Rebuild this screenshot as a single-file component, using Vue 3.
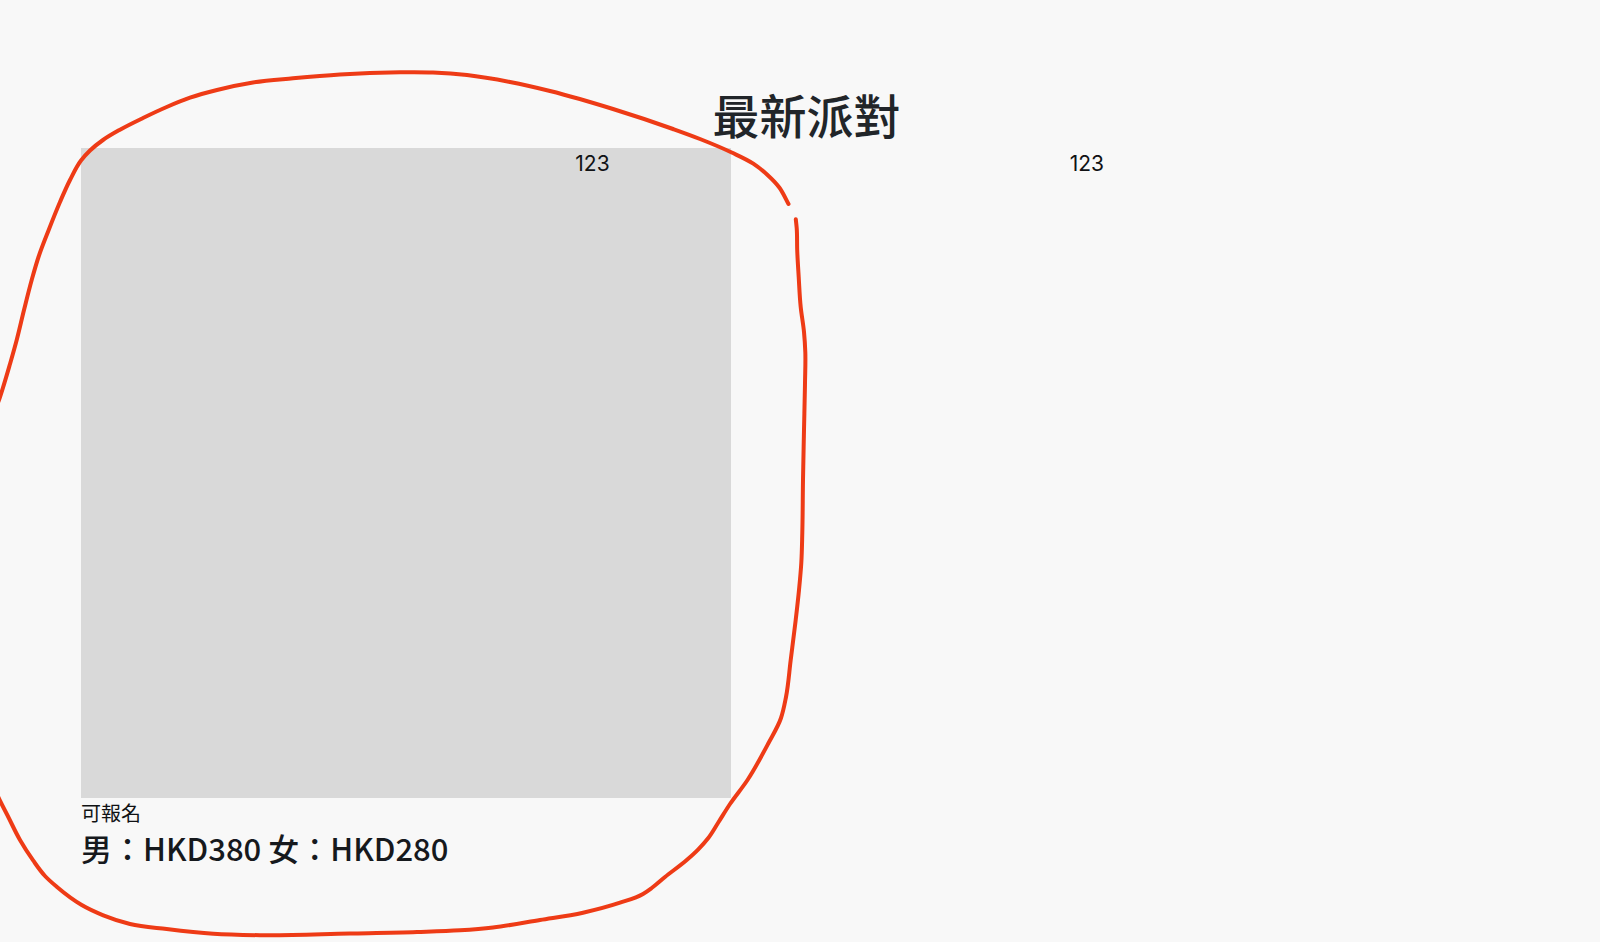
<script setup>
const strokes = [
  [
    [-6, 414], [0, 397], [10, 364], [16.7, 340], [24, 310], [31.7, 280], [38.5, 257], [48.3, 231], [60, 202],
    [70, 180], [81, 160.5], [90, 150.5], [103, 140], [120, 129.7], [143, 118], [166.7, 107], [190, 97.7],
    [217, 90], [253, 82.5], [293, 78.3], [340, 74.4], [400, 72.3], [433, 72.5], [467, 75], [510, 82],
    [550, 91], [613, 109], [673, 129], [700, 139], [731.7, 152.5], [753.3, 163.7], [767, 174.5],
    [779.3, 187.5], [788.5, 204],
  ],
  [
    [795.8, 219.3], [796.7, 228], [797.2, 250], [798.7, 277], [800.7, 307], [804, 332], [805.3, 352],
    [805, 383], [804, 430], [803, 480], [802.3, 533], [801.3, 563], [799, 590], [795.7, 620], [790.7, 660],
    [786, 697], [781, 718], [768, 744], [747.5, 780], [730, 804], [718.3, 822.5], [708.3, 838], [698.3, 849.3],
    [686.7, 860], [665, 877], [651.7, 888], [643, 894], [620, 902.7], [583, 912.7], [540, 920], [493, 927.5],
    [460, 930.3], [417, 932], [350, 933.5], [260, 935.2], [213.3, 933.7], [166.7, 929], [130, 924],
    [103.3, 915.3], [81.7, 905], [57, 887], [45, 876], [33.3, 860.7], [20, 840], [8.3, 817], [0, 800.7],
    [-6, 788],
  ],
]

const chord = (a, b) => Math.hypot(b[0] - a[0], b[1] - a[1])

// Unit-speed direction at point i, weighted by the lengths of its two neighbouring chords
function tangent(points, i) {
  const before = points[i - 1]
  const here = points[i]
  const after = points[i + 1]
  const next = after && [0, 1].map((k) => (after[k] - here[k]) / chord(here, after))
  const prev = before && [0, 1].map((k) => (here[k] - before[k]) / chord(before, here))
  if (!next) return prev
  if (!prev) return next
  const p = chord(before, here)
  const n = chord(here, after)
  return [0, 1].map((k) => (prev[k] * n + next[k] * p) / (p + n))
}

function smooth(points) {
  let d = `M${points[0].join(' ')}`
  for (let i = 0; i < points.length - 1; i++) {
    const from = points[i]
    const to = points[i + 1]
    const third = chord(from, to) / 3
    const start = tangent(points, i)
    const end = tangent(points, i + 1)
    const c1 = [0, 1].map((k) => from[k] + start[k] * third)
    const c2 = [0, 1].map((k) => to[k] - end[k] * third)
    d += `C${[...c1, ...c2, ...to].join(' ')}`
  }
  return d
}

const paths = strokes.map(smooth)
</script>

<template>
  <main class="page">
    <h1 class="title">最新派對</h1>
    <section class="parties">
      <article class="party">
        <div class="cover"></div>
        <p class="status">可報名</p>
        <h2 class="price">男：HKD380 女：HKD280</h2>
      </article>
      <article class="party">123</article>
      <article class="party">123</article>
    </section>
    <svg class="marker" viewBox="0 0 1600 942" width="1600" height="942" aria-hidden="true">
      <path v-for="(d, i) in paths" :key="i" :d="d" />
    </svg>
  </main>
</template>

<style>
body {
  margin: 0;
  background: #f8f8f8;
}
</style>

<style scoped>
.page {
  position: relative;
  box-sizing: border-box;
  min-height: 100vh;
  padding: 86px 68px 0 81px;
  overflow: hidden;
  color: #101214;
  font-family: Inter, "Noto Sans CJK TC", sans-serif;
  font-size: 21px;
  line-height: 32px;
}

.title {
  margin: 0 0 6px;
  color: #212529;
  font-family: "Noto Sans CJK TC", sans-serif;
  font-size: 47px;
  font-weight: 500;
  line-height: 56px;
  text-align: center;
}

.parties {
  display: grid;
  grid-template-columns: repeat(3, minmax(0, 1fr));
  gap: 32px;
}

.party {
  position: relative;
}

.cover {
  width: 140.7%;
  aspect-ratio: 1;
  background: #d9d9d9;
}

.status {
  margin: 0;
  font-size: 20px;
}

.price {
  margin: 0;
  color: #16191d;
  font-family: "Noto Sans CJK TC", sans-serif;
  font-size: 31px;
  font-weight: 500;
  line-height: 36px;
  white-space: nowrap;
}

.marker {
  position: absolute;
  top: 0;
  left: 0;
  pointer-events: none;
}

.marker path {
  fill: none;
  stroke: #ee3b16;
  stroke-width: 4;
  stroke-linecap: round;
}
</style>
